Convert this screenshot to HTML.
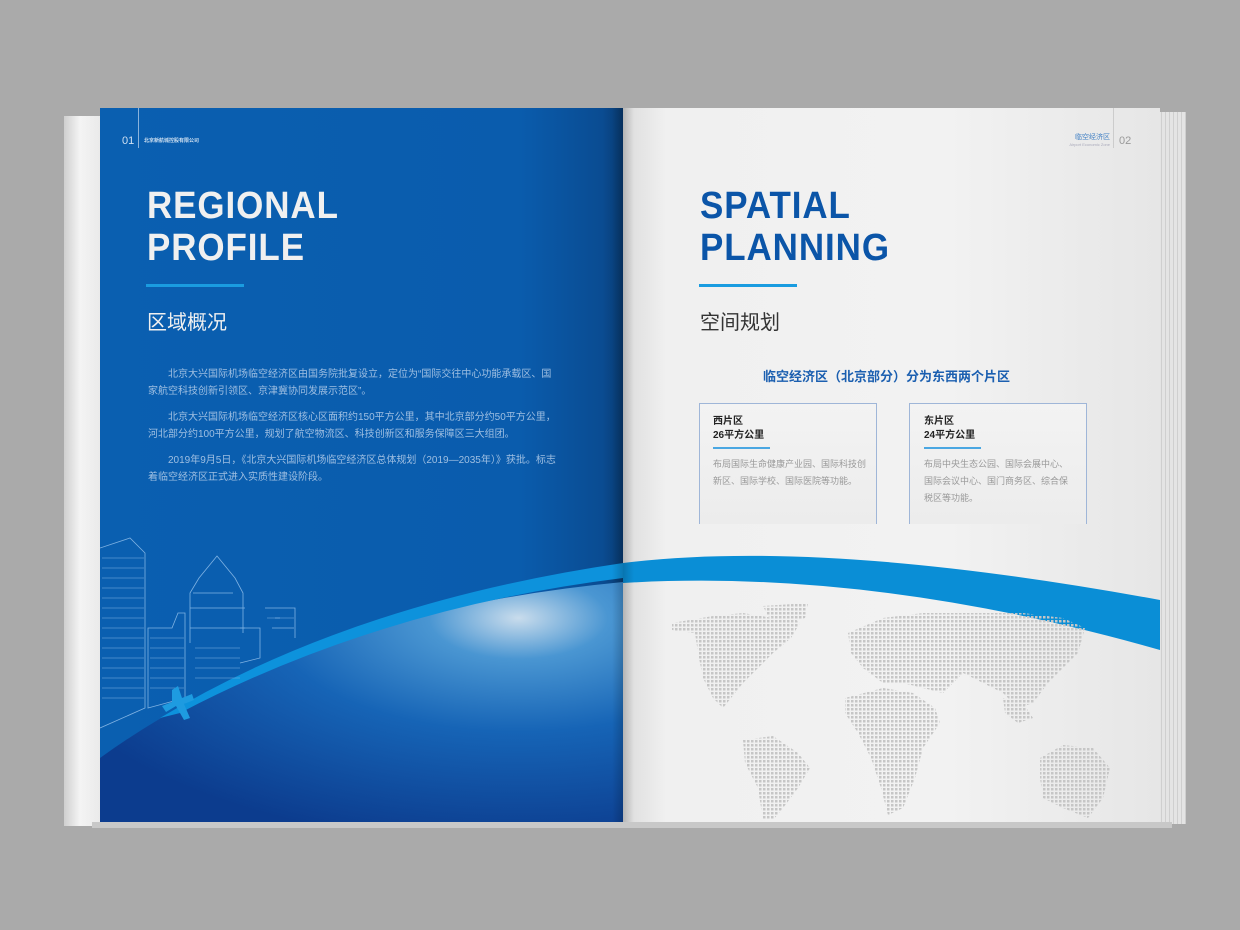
<!DOCTYPE html>
<html><head><meta charset="utf-8"><style>
body{margin:0;width:1240px;height:930px;background:#aaaaaa;position:relative;overflow:hidden;font-family:"Liberation Sans","Noto Sans CJK SC",sans-serif}
.abs{position:absolute}
.lp{left:100px;top:108px;width:523px;height:714px;background:linear-gradient(90deg,#0a5fb0 0%,#0a5cad 80%,#0a4c92 96%,#083a70 100%);overflow:hidden}
.rp{left:623px;top:108px;width:537px;height:714px;background:linear-gradient(90deg,#dcdcdc 0%,#f0f0f0 8%,#f2f2f2 60%,#e6e6e6 100%);overflow:hidden}
.h1{font-weight:bold;font-size:38px;line-height:42px;letter-spacing:1px;transform:scaleX(0.92);transform-origin:0 0}
.body{color:#9fbfe2;font-size:10px;line-height:17px}
.card{border:1px solid #9fb6d8;border-bottom:none;width:176px;height:120px;background:linear-gradient(#f3f3f3,#ececec)}
</style></head><body>
<div class="abs" style="left:64px;top:116px;width:40px;height:710px;background:linear-gradient(90deg,#cfcfcf,#f4f4f4 40%,#e8e8e8);"></div>
<div class="abs" style="left:1150px;top:112px;width:36px;height:712px;background:repeating-linear-gradient(90deg,#e4e4e4 0 3px,#cfcfcf 3px 4px);"></div>
<div class="abs" style="left:92px;top:822px;width:1080px;height:6px;background:#c8c8c8"></div>

<div class="abs lp">
 <svg class="abs" style="left:0;top:0" width="523" height="714">
  <defs>
   <radialGradient id="e" cx="0.8" cy="0.15" r="0.95">
    <stop offset="0" stop-color="#c9dcec"/><stop offset="0.18" stop-color="#4a96d2"/><stop offset="0.5" stop-color="#1664b6"/><stop offset="1" stop-color="#0c3c8e"/>
   </radialGradient>
  </defs>
  <path d="M0 650 Q200 505 523 474 L523 714 L0 714Z" fill="url(#e)"/>
  <path d="M60 610 Q250 495 523 455 L523 470 Q280 500 80 605Z" fill="#0d92dc"/>
  <g stroke="#7fb2e3" stroke-width="0.8" fill="none">
   <path d="M0 440 L30 430 L45 445 L45 600 L0 620"/>
   <path d="M48 520 L72 520 L78 505 L85 505 L85 590 L48 600Z"/>
   <path d="M90 535 L90 485 L99 470 L117 448 L135 470 L143 485 L143 525"/>
   <path d="M93 485 L133 485 M90 500 L145 500 M90 520 L145 520"/>
   <path d="M140 520 L160 520 L160 550 L140 555 M165 500 L195 500 L195 530"/>
   <path d="M175 510 L180 510 M172 520 L194 520"/>
  </g>
  <g stroke="#7fb2e3" stroke-width="0.6">
   <path d="M2 450H44M2 460H44M2 470H44M2 480H44M2 490H44M2 500H44M2 510H44M2 520H44M2 530H44M2 540H44M2 550H44M2 560H44M2 570H44M2 580H44M2 590H44M50 530H84M50 540H84M50 550H84M50 560H84M50 570H84M50 580H84M95 540H140M95 550H140M95 560H140M95 570H140M167 510H194"/>
  </g>
  <path d="M72 582 L78 578 L82 590 L92 586 L94 592 L84 596 L90 610 L84 612 L76 598 L66 604 L62 598 L72 594Z" fill="#1e9be0"/>
 </svg>
 <div class="abs" style="left:22px;top:27px;color:#cfe0f2;font-size:11px">01</div>
 <div class="abs" style="left:38px;top:0;width:1px;height:40px;background:#8ab3dc"></div>
 <div class="abs" style="left:44px;top:29px;color:#cfe0f2;font-size:5px;font-weight:bold">北京新航城控股有限公司</div>
 <div class="abs h1" style="left:47px;top:77px;color:#f0f0f0">REGIONAL<br>PROFILE</div>
 <div class="abs" style="left:46px;top:176px;width:98px;height:3px;background:#1a9ce0"></div>
 <div class="abs" style="left:47px;top:198px;color:#f0f0f0;font-size:20px">区域概况</div>
 <div class="abs body" style="left:48px;top:258px;width:412px">
  <div style="text-indent:20px">北京大兴国际机场临空经济区由国务院批复设立，定位为“国际交往中心功能承载区、国家航空科技创新引领区、京津冀协同发展示范区”。</div>
  <div style="text-indent:20px;margin-top:9px">北京大兴国际机场临空经济区核心区面积约150平方公里，其中北京部分约50平方公里，河北部分约100平方公里，规划了航空物流区、科技创新区和服务保障区三大组团。</div>
  <div style="text-indent:20px;margin-top:9px">2019年9月5日，《北京大兴国际机场临空经济区总体规划（2019—2035年）》获批。标志着临空经济区正式进入实质性建设阶段。</div>
 </div>
</div>

<div class="abs rp">
 <svg class="abs" style="left:0;top:0" width="537" height="714">
  <defs><pattern id="d" width="4" height="4" patternUnits="userSpaceOnUse"><rect width="2.5" height="2.5" fill="#c6c6c6"/></pattern></defs>
  <path d="M0 455 Q200 430 537 492 L537 542 Q250 460 0 475Z" fill="#0a8ed6"/>
  <g fill="url(#d)">
   <path d="M49 515 L90 508 L120 505 L150 510 L165 505 L177 515 L168 530 L150 545 L135 560 L120 575 L108 590 L100 600 L90 590 L80 570 L75 545 L72 525 L49 522Z"/>
   <path d="M140 498 L185 495 L182 510 L160 515 L145 508Z"/>
   <path d="M120 632 L150 628 L175 645 L187 660 L175 680 L160 700 L150 712 L140 712 L135 680 L122 655Z"/>
   <path d="M225 525 L260 510 L300 505 L350 505 L400 505 L440 510 L462 520 L455 545 L440 560 L425 575 L410 595 L395 600 L380 585 L360 575 L340 565 L320 585 L300 580 L280 575 L260 575 L240 560 L228 545Z"/>
   <path d="M222 590 L260 580 L290 585 L312 600 L317 615 L300 640 L292 670 L280 700 L265 707 L258 680 L248 650 L235 625 L222 605Z"/>
   <path d="M380 590 L400 595 L410 610 L395 615 L382 605Z"/>
   <path d="M417 650 L440 637 L470 640 L487 660 L480 690 L465 710 L440 700 L420 690 L417 670Z"/>
  </g>
 </svg>
 <div class="abs" style="left:445px;top:24px;color:#3f7fc4;font-size:7px;text-align:right;width:42px">临空经济区<div style="color:#aab;font-size:4px">Airport Economic Zone</div></div>
 <div class="abs" style="left:490px;top:0;width:1px;height:40px;background:#ccc"></div>
 <div class="abs" style="left:496px;top:27px;color:#999;font-size:11px">02</div>
 <div class="abs h1" style="left:77px;top:77px;color:#0b55a8">SPATIAL<br>PLANNING</div>
 <div class="abs" style="left:76px;top:176px;width:98px;height:3px;background:#1a9ce0"></div>
 <div class="abs" style="left:77px;top:198px;color:#333;font-size:20px">空间规划</div>
 <div class="abs" style="left:140px;top:258px;color:#1b5fb0;font-size:13px;font-weight:bold">临空经济区（北京部分）分为东西两个片区</div>
 <div class="abs card" style="left:76px;top:295px"></div>
 <div class="abs card" style="left:286px;top:295px"></div>
 <div class="abs" style="left:90px;top:307px;font-size:10px;font-weight:bold;color:#222;line-height:14px">西片区<br>26平方公里</div>
 <div class="abs" style="left:90px;top:339px;width:57px;height:2px;background:#4aa7e2"></div>
 <div class="abs" style="left:90px;top:348px;font-size:9px;color:#999;line-height:17px;width:160px">布局国际生命健康产业园、国际科技创新区、国际学校、国际医院等功能。</div>
 <div class="abs" style="left:301px;top:307px;font-size:10px;font-weight:bold;color:#222;line-height:14px">东片区<br>24平方公里</div>
 <div class="abs" style="left:301px;top:339px;width:57px;height:2px;background:#4aa7e2"></div>
 <div class="abs" style="left:301px;top:348px;font-size:9px;color:#999;line-height:17px;width:150px">布局中央生态公园、国际会展中心、国际会议中心、国门商务区、综合保税区等功能。</div>
</div>
<div class="abs" style="left:612px;top:108px;width:22px;height:714px;background:linear-gradient(90deg,rgba(0,0,0,0) ,rgba(0,0,0,.18) 50%,rgba(0,0,0,0))"></div>
</body></html>
